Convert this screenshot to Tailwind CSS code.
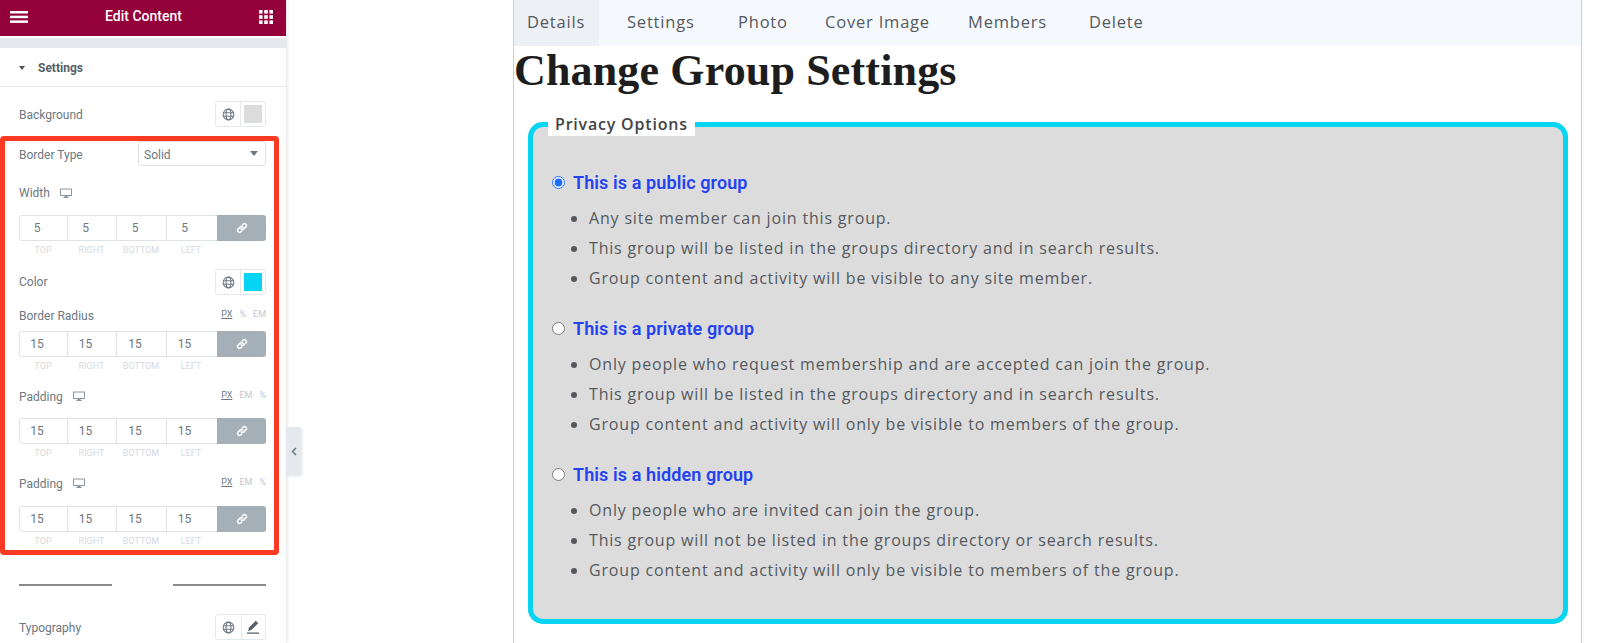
<!DOCTYPE html>
<html lang="en">
<head>
    <meta charset="UTF-8">
    <meta name="viewport" content="width=device-width, initial-scale=1.0">
    <title>Change Group Settings</title>
    <script src="https://cdn.jsdelivr.net/npm/@tailwindcss/browser@4"></script>
</head>
<body class="bg-white h-[643px] overflow-hidden flex font-['Roboto',sans-serif]">
    <svg class="hidden">
        <symbol id="globe" viewBox="0 0 16 16"><g fill="none" stroke="currentColor" stroke-width="1.3"><circle cx="8" cy="8" r="6.6"/><ellipse cx="8" cy="8" rx="3" ry="6.6"/><path d="M1.6 5.8h12.8M1.6 10.2h12.8"/></g></symbol>
        <symbol id="desktop" viewBox="0 0 16 16"><path fill="currentColor" fill-rule="evenodd" d="M1 2h14a1 1 0 0 1 1 1v8a1 1 0 0 1-1 1h-5v1.2h1.5V14.500h-7V13.200H6V12H1a1 1 0 0 1-1-1V3a1 1 0 0 1 1-1zm.3 1.300v7.400h13.400V3.300z"/></symbol>
        <symbol id="link" viewBox="0 0 16 16"><g fill="none" stroke="currentColor" stroke-width="2" stroke-linecap="round"><path d="M6.800 9.200a2.600 2.600 0 0 0 3.700 0l2.600-2.600a2.600 2.600 0 0 0-3.700-3.700L8.300 4"/><path d="M9.200 6.800a2.600 2.600 0 0 0-3.700 0L2.900 9.400a2.600 2.600 0 0 0 3.700 3.700L7.700 12"/></g></symbol>
    </svg>

    <!--Editor panel-->
    <aside class="relative w-[286px] h-[643px] shrink-0 bg-white shadow-[1px_0_3px_rgba(0,0,0,0.12)]">
        <header class="h-[36px] pb-[3px] bg-[#93003a] flex items-center justify-between pl-[10px] pr-[13px] text-white">
            <svg class="w-[18px] h-[14px]" viewBox="0 0 18 14" fill="currentColor"><rect y="1" width="18" height="2.500"/><rect y="5.700" width="18" height="2.500"/><rect y="10.400" width="18" height="2.500"/></svg>
            <span class="text-[14px] font-medium">Edit Content</span>
            <svg class="w-[14px] h-[14px]" viewBox="0 0 14 14" fill="currentColor"><rect width="3.600" height="3.600"/><rect x="5.200" width="3.600" height="3.600"/><rect x="10.400" width="3.600" height="3.600"/><rect y="5.200" width="3.600" height="3.600"/><rect x="5.200" y="5.200" width="3.600" height="3.600"/><rect x="10.400" y="5.200" width="3.600" height="3.600"/><rect y="10.400" width="3.600" height="3.600"/><rect x="5.200" y="10.400" width="3.600" height="3.600"/><rect x="10.400" y="10.400" width="3.600" height="3.600"/></svg>
        </header>
        <div class="h-[10px] mt-[2px] bg-[#e5e8ec]"></div>
        <div class="h-[39px] pt-[2px] flex items-center pl-[19px] gap-[7px] border-b border-[#e6e9ec] text-[12px] font-bold text-[#556068]">
            <span class="w-0 h-0 border-x-[3.500px] border-x-transparent border-t-[4px] border-t-[#4a5158]"></span>
            <span class="ml-[6px]">Settings</span>
        </div>

        <div class="mt-[14px] pl-[19px] pr-[20px] h-[26px] flex items-center justify-between text-[12px] text-[#6d7882]">
            <span class="pt-[2px]">Background</span>
            <div class="w-[51px] h-[26px] flex border border-[#e6e9ec] rounded-[3px]">
                <span class="w-[26px] flex items-center justify-center border-r border-[#e6e9ec]"><svg class="w-[13px] h-[13px]"><use href="#globe"/></svg></span>
                <span class="m-[3px] w-[18px] bg-[#dcdcdc]"></span>
            </div>
        </div>

        <!--Highlighted controls-->
        <div class="mt-[9px] w-[279px] h-[419px] border-[5px] border-[#fb3a24] rounded-[4px] pl-[14px] pr-[8px] text-[12px] text-[#6d7882]">
            <div class="h-[25px] flex items-center justify-between">
                <span class="pt-[2px]">Border Type</span>
                <div class="w-[128px] h-[25px] flex items-center justify-between pl-[5px] pr-[7px] border border-[#dfe3e7] rounded-[3px]">
                    <span class="pt-[2px]">Solid</span>
                    <span class="w-0 h-0 border-x-[4.500px] border-x-transparent border-t-[5px] border-t-[#6d7882]"></span>
                </div>
            </div>

            <div class="mt-[19px] h-[16px] flex items-center gap-[10px]">
                <span>Width</span>
                <svg class="w-[12px] h-[12px] text-[#8a949c]"><use href="#desktop"/></svg>
            </div>
            <div class="mt-[14px] h-[26px] flex border border-[#dfe3e7] rounded-[3px] text-center">
                <span class="w-[48px] pr-[13px] leading-[24px] border-r border-[#dfe3e7]">5</span>
                <span class="w-[49px] pr-[13px] leading-[24px] border-r border-[#dfe3e7]">5</span>
                <span class="w-[50px] pr-[13px] leading-[24px] border-r border-[#dfe3e7]">5</span>
                <span class="w-[50px] pr-[15px] leading-[24px]">5</span>
                <span class="flex-1 -my-px -mr-px rounded-r-[3px] bg-[#a4afb7] flex items-center justify-center text-white"><svg class="w-[12px] h-[12px]"><use href="#link"/></svg></span>
            </div>
            <div class="mt-[4px] h-[10px] flex text-center text-[9px] leading-[10px] text-[#d5dadf]">
                <span class="w-[48px]">TOP</span><span class="w-[49px]">RIGHT</span><span class="w-[50px]">BOTTOM</span><span class="w-[50px]">LEFT</span>
            </div>

            <div class="mt-[14px] h-[26px] flex items-center justify-between">
                <span>Color</span>
                <div class="w-[51px] h-[26px] flex border border-[#e6e9ec] rounded-[3px]">
                    <span class="w-[26px] flex items-center justify-center border-r border-[#e6e9ec]"><svg class="w-[13px] h-[13px]"><use href="#globe"/></svg></span>
                    <span class="m-[3px] w-[18px] bg-[#05d5f2]"></span>
                </div>
            </div>

            <div class="mt-[12px] h-[16px] flex items-center justify-between">
                <span class="pt-[2px]">Border Radius</span>
                <div class="flex gap-[7px] text-[9px] text-[#c2c8cd]"><span class="underline text-[#6d7882]">PX</span><span>%</span><span>EM</span></div>
            </div>
            <div class="mt-[8px] h-[26px] flex border border-[#dfe3e7] rounded-[3px] text-center">
                <span class="w-[48px] pr-[13px] leading-[24px] border-r border-[#dfe3e7]">15</span>
                <span class="w-[49px] pr-[13px] leading-[24px] border-r border-[#dfe3e7]">15</span>
                <span class="w-[50px] pr-[13px] leading-[24px] border-r border-[#dfe3e7]">15</span>
                <span class="w-[50px] pr-[15px] leading-[24px]">15</span>
                <span class="flex-1 -my-px -mr-px rounded-r-[3px] bg-[#a4afb7] flex items-center justify-center text-white"><svg class="w-[12px] h-[12px]"><use href="#link"/></svg></span>
            </div>
            <div class="mt-[4px] h-[10px] flex text-center text-[9px] leading-[10px] text-[#d5dadf]">
                <span class="w-[48px]">TOP</span><span class="w-[49px]">RIGHT</span><span class="w-[50px]">BOTTOM</span><span class="w-[50px]">LEFT</span>
            </div>

            <div class="mt-[17px] h-[16px] flex items-center">
                <span class="pt-[2px]">Padding</span>
                <svg class="ml-[10px] w-[12px] h-[12px] text-[#8a949c]"><use href="#desktop"/></svg>
                <div class="ml-auto flex gap-[7px] text-[9px] text-[#c2c8cd]"><span class="underline text-[#6d7882]">PX</span><span>EM</span><span>%</span></div>
            </div>
            <div class="mt-[14px] h-[26px] flex border border-[#dfe3e7] rounded-[3px] text-center">
                <span class="w-[48px] pr-[13px] leading-[24px] border-r border-[#dfe3e7]">15</span>
                <span class="w-[49px] pr-[13px] leading-[24px] border-r border-[#dfe3e7]">15</span>
                <span class="w-[50px] pr-[13px] leading-[24px] border-r border-[#dfe3e7]">15</span>
                <span class="w-[50px] pr-[15px] leading-[24px]">15</span>
                <span class="flex-1 -my-px -mr-px rounded-r-[3px] bg-[#a4afb7] flex items-center justify-center text-white"><svg class="w-[12px] h-[12px]"><use href="#link"/></svg></span>
            </div>
            <div class="mt-[4px] h-[10px] flex text-center text-[9px] leading-[10px] text-[#d5dadf]">
                <span class="w-[48px]">TOP</span><span class="w-[49px]">RIGHT</span><span class="w-[50px]">BOTTOM</span><span class="w-[50px]">LEFT</span>
            </div>

            <div class="mt-[17px] h-[16px] flex items-center">
                <span class="pt-[2px]">Padding</span>
                <svg class="ml-[10px] w-[12px] h-[12px] text-[#8a949c]"><use href="#desktop"/></svg>
                <div class="ml-auto flex gap-[7px] text-[9px] text-[#c2c8cd]"><span class="underline text-[#6d7882]">PX</span><span>EM</span><span>%</span></div>
            </div>
            <div class="mt-[15px] h-[26px] flex border border-[#dfe3e7] rounded-[3px] text-center">
                <span class="w-[48px] pr-[13px] leading-[24px] border-r border-[#dfe3e7]">15</span>
                <span class="w-[49px] pr-[13px] leading-[24px] border-r border-[#dfe3e7]">15</span>
                <span class="w-[50px] pr-[13px] leading-[24px] border-r border-[#dfe3e7]">15</span>
                <span class="w-[50px] pr-[15px] leading-[24px]">15</span>
                <span class="flex-1 -my-px -mr-px rounded-r-[3px] bg-[#a4afb7] flex items-center justify-center text-white"><svg class="w-[12px] h-[12px]"><use href="#link"/></svg></span>
            </div>
            <div class="mt-[4px] h-[10px] flex text-center text-[9px] leading-[10px] text-[#d5dadf]">
                <span class="w-[48px]">TOP</span><span class="w-[49px]">RIGHT</span><span class="w-[50px]">BOTTOM</span><span class="w-[50px]">LEFT</span>
            </div>
        </div>

        <div class="mt-[29px] pl-[19px] pr-[20px] flex justify-between">
            <span class="w-[93px] h-[2px] bg-[#87898c]"></span>
            <span class="w-[93px] h-[2px] bg-[#87898c]"></span>
        </div>

        <div class="mt-[28px] pl-[19px] pr-[20px] h-[26px] flex items-center justify-between text-[12px] text-[#6d7882]">
            <span class="pt-[2px]">Typography</span>
            <div class="w-[51px] h-[26px] flex border border-[#e6e9ec] rounded-[3px]">
                <span class="w-[26px] flex items-center justify-center border-r border-[#e6e9ec]"><svg class="w-[13px] h-[13px]"><use href="#globe"/></svg></span>
                <span class="flex-1 flex items-center justify-center text-[#556068]">
                    <svg class="w-[13px] h-[14px]" viewBox="0 0 13 14" fill="currentColor"><path d="M8.800 0.800l2.400 2.400-6.900 6.900-3.200 0.800 0.800-3.200zM0 12.500h12v1.300H0z"/></svg>
                </span>
            </div>
        </div>

        <!--Collapse handle-->
        <div class="absolute left-[286px] top-[427px] w-[15px] h-[48px] bg-[#e5e8ec] rounded-r-[3px] shadow-[1px_1px_3px_rgba(0,0,0,0.12)] flex items-center justify-center text-[#6d7882]">
            <svg class="w-[6px] h-[9px]" viewBox="0 0 6 9" fill="none" stroke="currentColor" stroke-width="1.500"><path d="M5 1 1.500 4.500 5 8"/></svg>
        </div>
    </aside>

    <!--Page preview-->
    <main class="ml-[227px] w-[1069px] h-[643px] shrink-0 border-x border-[#a9dcf3]">
        <nav class="h-[46px] bg-[#f5f9fd] flex text-[#55595e] text-[16.500px] tracking-[0.8px] font-['Open_Sans',sans-serif] leading-[44px]">
            <a class="w-[85px] pl-[13px] bg-[#edf1f6]">Details</a>
            <a class="w-[111px] pl-[28px]">Settings</a>
            <a class="w-[88px] pl-[28px]">Photo</a>
            <a class="w-[144px] pl-[27px]">Cover Image</a>
            <a class="w-[147px] pl-[26px]">Members</a>
            <a>Delete</a>
        </nav>

        <h1 class="h-[50px] text-[44px] leading-[50px] font-bold text-[#1d1d1d] tracking-[0.16px] font-['Liberation_Serif',serif]">Change Group Settings</h1>

        <fieldset class="ml-[14px] mt-[17px] w-[1040px] h-[511px] border-[5px] border-[#05d5f2] rounded-[15px] bg-[#dcdcdc] pl-[19px] font-['Open_Sans',sans-serif]">
            <legend class="-ml-[4px] px-[7px] bg-white text-[16px] leading-[23px] font-semibold tracking-[0.8px] text-[#444]">Privacy Options</legend>

            <div class="mt-[34px] h-[24px] flex items-center gap-[8px] text-[18px] font-semibold tracking-[0.1px] text-[#2442f0] font-['Roboto',sans-serif]">
                <input type="radio" name="privacy" checked class="w-[13px] h-[13px] accent-[#1a6dff]">
                <label>This is a public group</label>
            </div>
            <ul class="mt-[9px] ml-[37px] list-disc marker:text-[#55595e] text-[16px] leading-[30px] tracking-[0.82px] text-[#55595e]">
                <li>Any site member can join this group.</li>
                <li>This group will be listed in the groups directory and in search results.</li>
                <li>Group content and activity will be visible to any site member.</li>
            </ul>

            <div class="mt-[23px] h-[24px] flex items-center gap-[8px] text-[18px] font-semibold tracking-[0.1px] text-[#2442f0] font-['Roboto',sans-serif]">
                <input type="radio" name="privacy" class="w-[13px] h-[13px] accent-[#1a6dff]">
                <label>This is a private group</label>
            </div>
            <ul class="mt-[9px] ml-[37px] list-disc marker:text-[#55595e] text-[16px] leading-[30px] tracking-[0.82px] text-[#55595e]">
                <li>Only people who request membership and are accepted can join the group.</li>
                <li>This group will be listed in the groups directory and in search results.</li>
                <li>Group content and activity will only be visible to members of the group.</li>
            </ul>

            <div class="mt-[23px] h-[24px] flex items-center gap-[8px] text-[18px] font-semibold tracking-[0.1px] text-[#2442f0] font-['Roboto',sans-serif]">
                <input type="radio" name="privacy" class="w-[13px] h-[13px] accent-[#1a6dff]">
                <label>This is a hidden group</label>
            </div>
            <ul class="mt-[9px] ml-[37px] list-disc marker:text-[#55595e] text-[16px] leading-[30px] tracking-[0.82px] text-[#55595e]">
                <li>Only people who are invited can join the group.</li>
                <li>This group will not be listed in the groups directory or search results.</li>
                <li>Group content and activity will only be visible to members of the group.</li>
            </ul>
        </fieldset>
    </main>
</body>
</html>
